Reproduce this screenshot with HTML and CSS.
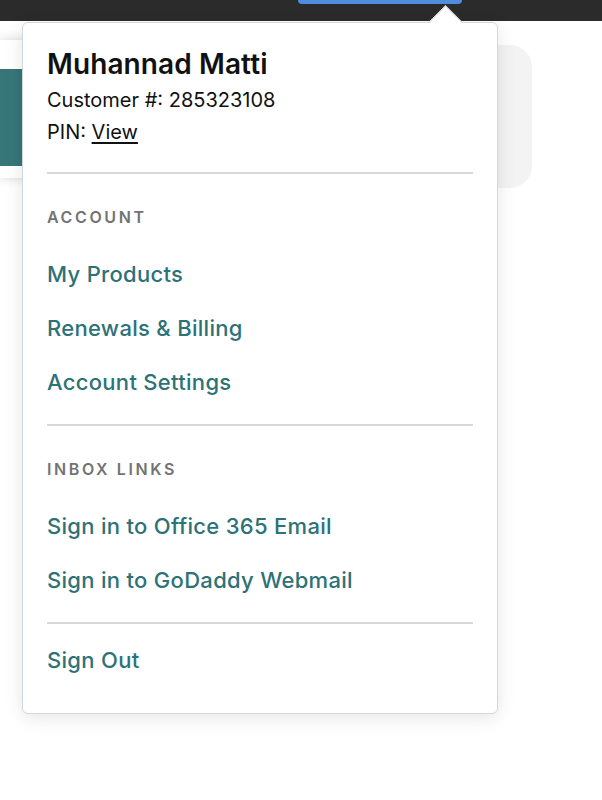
FILE: index.html
```html
<!DOCTYPE html>
<html lang="en">
<head>
<meta charset="utf-8">
<title>Account menu</title>
<link rel="stylesheet" href="styles.css">
</head>
<body>
<header class="topbar">
  <div class="topbtn"></div>
</header>
<main class="page">
  <div class="left-card"><div class="teal-block"></div></div>
  <div class="right-card"></div>
</main>

<div class="dropdown">
  <span class="caret"></span>
  <section class="profile">
    <h2 class="name">Muhannad Matti</h2>
    <p class="meta">Customer #: 285323108</p>
    <p class="meta">PIN: <a href="#" class="pin-link">View</a></p>
  </section>
  <section class="group">
    <h3 class="group-title">ACCOUNT</h3>
    <a href="#" class="menu-link">My Products</a>
    <a href="#" class="menu-link">Renewals &amp; Billing</a>
    <a href="#" class="menu-link">Account Settings</a>
  </section>
  <section class="group">
    <h3 class="group-title">INBOX LINKS</h3>
    <a href="#" class="menu-link">Sign in to Office 365 Email</a>
    <a href="#" class="menu-link">Sign in to GoDaddy Webmail</a>
  </section>
  <section class="group last">
    <a href="#" class="menu-link">Sign Out</a>
  </section>
</div>
</body>
</html>
```
FILE: styles.css
```css
* { box-sizing: border-box; }
html, body { margin: 0; padding: 0; }
body {
  background: #ffffff;
  font-family: Inter, "Liberation Sans", sans-serif;
  color: #111111;
  width: 602px;
  height: 800px;
  overflow: hidden;
  position: relative;
}
.topbar {
  height: 21px;
  background: #2b2b2b;
  display: flex;
}
.topbtn {
  margin-left: 298px;
  width: 164px;
  height: 4px;
  background: #4f8ddc;
  border-radius: 0 0 8px 8px;
}
.page {
  display: flex;
  align-items: flex-start;
  padding-top: 24px;
}
.left-card {
  margin-top: -5px;
  width: 300px;
  height: 138px;
  background: #ffffff;
  box-shadow: 0 0 10px rgba(0,0,0,0.16);
  padding-top: 29px;
}
.teal-block {
  height: 97px;
  background: #367679;
}
.right-card {
  margin-left: 120px;
  width: 112px;
  height: 143px;
  background: #f3f3f3;
  border-radius: 0 22px 22px 0;
}
.dropdown {
  position: absolute;
  left: 22px;
  top: 22px;
  width: 476px;
  height: 692px;
  background: #ffffff;
  border: 1px solid #d3d8dc;
  border-radius: 6px;
  box-shadow: 0 4px 18px rgba(0,0,0,0.10);
  padding: 23px 24px 0 24px;
}
.caret {
  position: absolute;
  left: 411px;
  top: -13px;
  width: 23px;
  height: 23px;
  background: #ffffff;
  border-top: 1px solid #d3d8dc;
  border-left: 1px solid #d3d8dc;
  transform: rotate(45deg);
}
.profile {
  padding-bottom: 24px;
  position: relative;
}
.name {
  margin: 0 0 2px 0;
  font-size: 28px;
  line-height: 36px;
  font-weight: 600;
  letter-spacing: 0.1px;
  color: #111111;
}
.meta {
  margin: 0;
  font-size: 20px;
  line-height: 32px;
  color: #111111;
}
.pin-link {
  color: #111111;
  text-decoration: underline;
  text-decoration-thickness: 2px;
  text-underline-offset: 3px;
}
.group {
  border-top: 2px solid #d8d8d8;
  padding: 33px 0 15px 0;
  display: flex;
  flex-direction: column;
}
.group.last {
  padding-top: 9px;
}
.group-title {
  margin: 0 0 20px 0;
  font-size: 16px;
  line-height: 20px;
  font-weight: 600;
  letter-spacing: 2.6px;
  color: #737373;
}
.menu-link {
  font-size: 22px;
  line-height: 54px;
  color: #2d7277;
  text-decoration: none;
  font-weight: 500;
  letter-spacing: 0.3px;
}
```
